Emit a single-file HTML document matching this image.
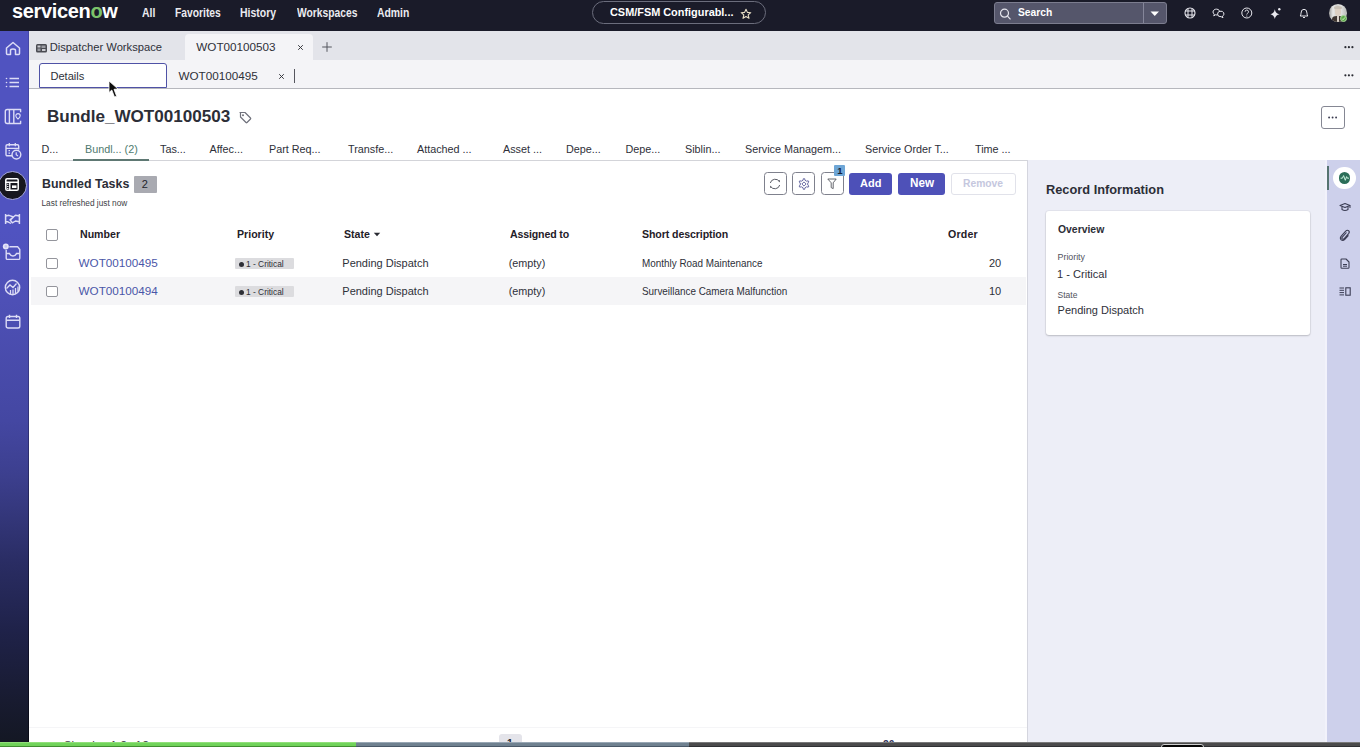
<!DOCTYPE html>
<html><head><meta charset="utf-8"><title>Bundle_WOT00100503</title>
<style>
html,body{margin:0;padding:0;}
body{width:1360px;height:747px;overflow:hidden;position:relative;background:#fff;font-family:"Liberation Sans",sans-serif;}
.t{position:absolute;white-space:nowrap;line-height:1;transform-origin:0 0;}
.r{position:absolute;}
svg.r{overflow:visible;}
</style></head><body>
<div class="r" style="left:0px;top:0px;width:1360px;height:31px;background:#1a1b29"></div>
<div class="r" style="left:29px;top:31px;width:1331px;height:29px;background:#e3e4ea"></div>
<div class="r" style="left:184.5px;top:33.5px;width:128px;height:26.5px;background:#f4f4f7;border-radius:4px 4px 0 0"></div>
<div class="r" style="left:29px;top:60px;width:1331px;height:28px;background:#f4f4f7"></div>
<div class="r" style="left:29px;top:88px;width:1331px;height:1px;background:#b6b7bd"></div>
<div class="r" style="left:29px;top:89px;width:998px;height:658px;background:#ffffff"></div>
<div class="r" style="left:1027px;top:160px;width:300px;height:587px;background:#edeef7"></div>
<div class="r" style="left:1325px;top:160px;width:2px;height:587px;background:#f2f2fb"></div>
<div class="r" style="left:1027px;top:160px;width:1px;height:587px;background:#d4d5de"></div>
<div class="r" style="left:1327px;top:160px;width:33px;height:587px;background:#cdd0eb"></div>
<div class="r" style="left:1027px;top:89px;width:333px;height:71px;background:#ffffff"></div>
<div class="r" style="left:30px;top:160px;width:997px;height:1px;background:#d3d4d9"></div>
<div class="r" style="left:0px;top:31px;width:29px;height:716px;background:linear-gradient(to bottom,#5053c0 0px,#5053c0 200px,#4e50b6 270px,#4447a2 390px,#3c3f8e 445px,#2a2d64 530px,#1f2249 600px,#181b30 670px,#131722 716px)"></div>
<div class="r" style="left:28px;top:31px;width:1px;height:716px;background:linear-gradient(to bottom,rgba(0,0,20,0.15) 0px,rgba(0,0,20,0.2) 300px,rgba(0,0,10,0.55) 716px)"></div>
<div class="t" style="left:12px;top:1.40px;font-size:20.00px;color:#ffffff;font-weight:700;letter-spacing:-0.35px;">servicen<span style="color:#7cc36a">o</span>w</div>
<div class="t" style="left:141.5px;top:7.00px;font-size:12.18px;color:#ebebf0;font-weight:700;transform:scaleX(0.8621);">All</div>
<div class="t" style="left:175px;top:8.01px;font-size:11.95px;color:#ebebf0;font-weight:700;transform:scaleX(0.8621);">Favorites</div>
<div class="t" style="left:240px;top:7.00px;font-size:12.18px;color:#ebebf0;font-weight:700;transform:scaleX(0.8621);">History</div>
<div class="t" style="left:297px;top:8.01px;font-size:11.95px;color:#ebebf0;font-weight:700;transform:scaleX(0.8621);">Workspaces</div>
<div class="t" style="left:377px;top:7.01px;font-size:12.06px;color:#ebebf0;font-weight:700;transform:scaleX(0.8621);">Admin</div>
<div class="r" style="left:592px;top:1px;width:174px;height:23px;border:1px solid #6b6d7c;border-radius:12px;box-sizing:border-box;"></div>
<div class="t" style="left:609.5px;top:7.30px;font-size:11.45px;color:#ffffff;font-weight:700;transform:scaleX(0.9524);">CSM/FSM Configurabl...</div>
<svg class="r" style="left:740px;top:8px;" width="12" height="12" viewBox="0 0 12 12"><path d="M6 1.2 L7.4 4.4 L10.8 4.7 L8.2 6.9 L9 10.3 L6 8.5 L3 10.3 L3.8 6.9 L1.2 4.7 L4.6 4.4 Z" fill="none" stroke="#e8dfc6" stroke-width="1.1" stroke-linejoin="round"/></svg>
<div class="r" style="left:993.5px;top:2px;width:173.5px;height:22px;background:#55566b;border:1px solid #7c7d8f;border-radius:3px;box-sizing:border-box;"></div>
<div class="r" style="left:1143px;top:3px;width:1px;height:20px;background:#85869a"></div>
<svg class="r" style="left:999px;top:8px;" width="13" height="12" viewBox="0 0 13 12"><circle cx="5.5" cy="5.2" r="4" fill="none" stroke="#e6e6ee" stroke-width="1.2"/><path d="M8.5 8.2 L11.5 11.3" stroke="#e6e6ee" stroke-width="1.2"/></svg>
<div class="t" style="left:1017.5px;top:7.32px;font-size:11.54px;color:#ffffff;font-weight:700;transform:scaleX(0.8929);">Search</div>
<svg class="r" style="left:1150px;top:11px;" width="10" height="6" viewBox="0 0 10 6"><path d="M0.5 0.5 L9 0.5 L4.75 5 Z" fill="#ffffff"/></svg>
<svg class="r" style="left:1184px;top:7px;" width="12" height="12" viewBox="0 0 12 12"><circle cx="6" cy="6" r="5" fill="none" stroke="#e8e8ee" stroke-width="1.1"/><path d="M4 1.4 V10.6 M8 1.4 V10.6 M1.2 4 H10.8 M1.2 8 H10.8" stroke="#e8e8ee" stroke-width="1"/></svg>
<svg class="r" style="left:1212px;top:8px;" width="13" height="10" viewBox="0 0 13 10"><path d="M1 4 a3.4 2.9 0 1 1 2.4 2.8 l-1.6 1.1 l0.5 -1.7 A3.4 2.9 0 0 1 1 4 Z" fill="none" stroke="#e8e8ee" stroke-width="1"/><path d="M5.6 6.2 a3.2 2.7 0 1 1 4.8 2 l0.6 1.5 l-1.9 -1 a3.2 2.7 0 0 1 -3.5 -2.5 Z" fill="#1a1b29" stroke="#e8e8ee" stroke-width="1"/></svg>
<svg class="r" style="left:1241px;top:7px;" width="12" height="12" viewBox="0 0 12 12"><circle cx="5.8" cy="6" r="5" fill="none" stroke="#e8e8ee" stroke-width="1"/><path d="M4.1 4.7 a1.7 1.7 0 1 1 2.4 1.6 c-0.5 0.3 -0.7 0.6 -0.7 1.2" fill="none" stroke="#e8e8ee" stroke-width="1"/><circle cx="5.8" cy="9" r="0.6" fill="#e8e8ee"/></svg>
<svg class="r" style="left:1270px;top:7px;" width="12" height="12" viewBox="0 0 12 12"><path d="M4.8 2.2 Q5.5 6.6 9.6 7.3 Q5.5 8 4.8 12 Q4.1 8 0 7.3 Q4.1 6.6 4.8 2.2 Z" fill="#e8e8ee"/><circle cx="9.3" cy="2.3" r="1.2" fill="#e8e8ee"/></svg>
<svg class="r" style="left:1298px;top:7px;" width="12" height="12" viewBox="0 0 12 12"><path d="M2.2 9 Q3 8.2 3 6.2 Q3 2.3 6 2.3 Q9 2.3 9 6.2 Q9 8.2 9.8 9 Z" fill="none" stroke="#e8e8ee" stroke-width="1" stroke-linejoin="round"/><path d="M5 10.3 Q6 11.2 7 10.3" fill="none" stroke="#e8e8ee" stroke-width="1"/></svg>
<div class="r" style="left:1329px;top:4px;width:18px;height:17.5px;border-radius:50%;overflow:hidden;background:linear-gradient(to right,#9a9a9a 0,#e8e8e6 22%,#d0d0ce 45%,#e4e4e2 65%,#b5b8b6 100%);"><div style="position:absolute;left:5.5px;top:3px;width:6.5px;height:8.5px;border-radius:45%;background:#dccfc2"></div><div style="position:absolute;left:5px;top:1.5px;width:7.5px;height:3.5px;border-radius:50% 50% 20% 20%;background:#c8c0b5"></div><div style="position:absolute;left:3px;top:11.5px;width:12px;height:8px;border-radius:40% 40% 0 0;background:#3e3530"></div><div style="position:absolute;left:7.5px;top:11.5px;width:2.5px;height:7px;background:#d9d0c8"></div></div>
<div class="r" style="left:1339.8px;top:15px;width:7px;height:7px;border-radius:50%;background:#5caa4a;border:1px solid #a9d89a;box-sizing:border-box;"></div>
<svg class="r" style="left:1340.8px;top:16px;" width="5" height="5" viewBox="0 0 5 5"><path d="M1 2.6 L2.1 3.7 L4 1.4" fill="none" stroke="#d8f5cf" stroke-width="0.9"/></svg>
<svg class="r" style="left:5px;top:41px;" width="16" height="15" viewBox="0 0 16 15"><path d="M1.5 7 L8 1.5 L14.5 7 V12.5 Q14.5 13.5 13.5 13.5 H10.5 V9.5 Q10.5 8 8 8 Q5.5 8 5.5 9.5 V13.5 H2.5 Q1.5 13.5 1.5 12.5 Z" fill="none" stroke="#dcdcf6" stroke-width="1.5" stroke-linejoin="round"/></svg>
<svg class="r" style="left:5px;top:77px;" width="15" height="11" viewBox="0 0 15 11"><path d="M4.5 1.5 H14 M4.5 5.5 H14 M4.5 9.5 H14" stroke="#dcdcf6" stroke-width="1.5"/><circle cx="1.5" cy="1.5" r="0.8" fill="#dcdcf6"/><circle cx="1.5" cy="5.5" r="0.8" fill="#dcdcf6"/><circle cx="1.5" cy="9.5" r="0.8" fill="#dcdcf6"/></svg>
<svg class="r" style="left:4px;top:108px;" width="18" height="17" viewBox="0 0 18 17"><path d="M9.8 1.5 H3.2 Q1.3 1.5 1.3 3.4 V13.6 Q1.3 15.5 3.2 15.5 H9.8 Z M5.4 1.5 V15.5 M9.8 1.5 H16.6 V4.3 M9.8 15.5 H16.6 V12.7" fill="none" stroke="#dcdcf6" stroke-width="1.4" stroke-linejoin="round"/><path d="M14 5.6 a2.2 2.2 0 0 1 2.2 2.2 c0 1.5 -2.2 3.3 -2.2 3.3 c0 0 -2.2 -1.8 -2.2 -3.3 A2.2 2.2 0 0 1 14 5.6 Z" fill="none" stroke="#dcdcf6" stroke-width="1.1"/></svg>
<svg class="r" style="left:5px;top:142px;" width="18" height="19" viewBox="0 0 18 19"><path d="M7 13.8 H2.3 Q1 13.8 1 12.5 V4 Q1 2.7 2.3 2.7 H12.4 Q13.7 2.7 13.7 4 V7.5" fill="none" stroke="#dcdcf6" stroke-width="1.4"/><path d="M4.3 1 V4.3 M10.3 1 V4.3 M1 6.3 H13.7 M3.5 8.7 H5 M3.5 11.2 H5" stroke="#dcdcf6" stroke-width="1.3"/><circle cx="11.4" cy="12.6" r="4.4" fill="#5053c0" stroke="#dcdcf6" stroke-width="1.4"/><path d="M11.2 10.3 V12.8 L13 14" fill="none" stroke="#dcdcf6" stroke-width="1.2"/></svg>
<div class="r" style="left:-2.5px;top:170.5px;width:29.5px;height:29.5px;border-radius:50%;background:#17171f;border:1.5px solid #a9abe6;box-sizing:border-box;"></div>
<svg class="r" style="left:5px;top:178px;" width="14" height="13" viewBox="0 0 14 13"><rect x="0.8" y="0.8" width="12.4" height="11.4" rx="1.3" fill="none" stroke="#ffffff" stroke-width="1.5"/><path d="M0.8 4.3 H13.2 M4.8 4.3 V12.2" stroke="#ffffff" stroke-width="1.4"/><rect x="7" y="7.4" width="4.5" height="2.6" fill="#ffffff"/><path d="M2 6.3 H3.5 M2 8.5 H3.5 M2 10.5 H3.5" stroke="#ffffff" stroke-width="0.9"/></svg>
<svg class="r" style="left:4px;top:213px;" width="17" height="12" viewBox="0 0 17 12"><path d="M1.6 1 V11 M15.4 1 V11" stroke="#dcdcf6" stroke-width="1.5"/><path d="M1.6 3 L5 2.3 L9.5 4 L6.2 7.2 M15.4 3 L11.5 2.3 L6 6.8 L8.3 9.8 L11.5 8 L15.4 8.8 M1.6 8.8 L4 8.8 L7 10.5" fill="none" stroke="#dcdcf6" stroke-width="1.4" stroke-linejoin="round"/></svg>
<svg class="r" style="left:2px;top:242px;" width="20" height="19" viewBox="0 0 20 19"><path d="M4.2 7.5 L6.2 4.8 H15.8 L17.8 7.5 V16.2 Q17.8 17.4 16.6 17.4 H5.4 Q4.2 17.4 4.2 16.2 Z" fill="none" stroke="#dcdcf6" stroke-width="1.4" stroke-linejoin="round"/><path d="M4.2 11.5 H7.5 Q8.5 14 11 14 Q13.5 14 14.5 11.5 H17.8" fill="none" stroke="#dcdcf6" stroke-width="1.4"/><circle cx="3.8" cy="4.4" r="3.6" fill="#5053c0"/><circle cx="3.8" cy="4.4" r="3" fill="#e4e4f8"/><circle cx="3.8" cy="4.4" r="1.3" fill="#c4c5ee"/></svg>
<svg class="r" style="left:4px;top:279px;" width="17" height="17" viewBox="0 0 17 17"><circle cx="8.5" cy="8.5" r="7.2" fill="none" stroke="#dcdcf6" stroke-width="1.4"/><path d="M2.5 9.5 L6 6 L9 8.5 L12.5 4.5 M6.5 15 V11 M9 15.5 V10.5 M11.5 15 V9 M14 12.5 V7.5" fill="none" stroke="#dcdcf6" stroke-width="1.3"/></svg>
<svg class="r" style="left:5px;top:314px;" width="16" height="15" viewBox="0 0 16 15"><rect x="1.2" y="2.5" width="13.6" height="11.5" rx="1.8" fill="none" stroke="#dcdcf6" stroke-width="1.4"/><path d="M1.2 6.3 H14.8 M4.5 0.8 V4 M11.5 0.8 V4" stroke="#dcdcf6" stroke-width="1.4"/></svg>
<svg class="r" style="left:35.5px;top:43.5px;" width="11" height="8.5" viewBox="0 0 11 8.5"><rect x="0" y="0" width="11" height="8.5" rx="1.5" fill="#4a4b52"/><rect x="1.5" y="1.5" width="3" height="2" fill="#c9cad0"/><rect x="5.5" y="1.5" width="4" height="2.5" fill="#9a9ba2"/><rect x="1.5" y="4.5" width="3" height="2.5" fill="#9a9ba2"/><rect x="6" y="5" width="3.5" height="2" fill="#c9cad0"/></svg>
<div class="t" style="left:49.7px;top:42.00px;font-size:11.20px;color:#2e3039;">Dispatcher Workspace</div>
<div class="t" style="left:196.3px;top:41.00px;font-size:11.70px;color:#2e3039;">WOT00100503</div>
<svg class="r" style="left:295.5px;top:43px;" width="9" height="9" viewBox="0 0 9 9"><path d="M2.2 2.2 L6.8 6.8 M6.8 2.2 L2.2 6.8" stroke="#303138" stroke-width="0.95"/></svg>
<svg class="r" style="left:321px;top:41px;" width="12" height="12" viewBox="0 0 12 12"><path d="M6 1.2 V10.8 M1.2 6 H10.8" stroke="#55565e" stroke-width="1"/></svg>
<svg class="r" style="left:1342px;top:43px;" width="13" height="8" viewBox="0 0 13 8"><circle cx="3.4" cy="4.2" r="1.1" fill="#2a2b33"/><circle cx="6.9" cy="4.2" r="1.1" fill="#2a2b33"/><circle cx="10.4" cy="4.2" r="1.1" fill="#2a2b33"/></svg>
<div class="r" style="left:38.5px;top:63px;width:128px;height:25px;background:#ffffff;border:1.8px solid #4f52a6;border-radius:3px 3px 0 0;box-sizing:border-box;"></div>
<div class="t" style="left:50.4px;top:71.31px;font-size:11.10px;color:#2e3039;">Details</div>
<div class="t" style="left:178.4px;top:70.30px;font-size:11.70px;color:#2e3039;">WOT00100495</div>
<svg class="r" style="left:276.5px;top:71.5px;" width="9" height="9" viewBox="0 0 9 9"><path d="M2.2 2.2 L6.8 6.8 M6.8 2.2 L2.2 6.8" stroke="#303138" stroke-width="0.95"/></svg>
<div class="r" style="left:294px;top:69px;width:1px;height:14px;background:#55565e"></div>
<svg class="r" style="left:1342px;top:71px;" width="13" height="8" viewBox="0 0 13 8"><circle cx="3.4" cy="4.3" r="1.1" fill="#2a2b33"/><circle cx="6.9" cy="4.3" r="1.1" fill="#2a2b33"/><circle cx="10.4" cy="4.3" r="1.1" fill="#2a2b33"/></svg>
<div class="t" style="left:47px;top:108.42px;font-size:17.10px;color:#2c2e37;font-weight:700;">Bundle_WOT00100503</div>
<svg class="r" style="left:238px;top:110px;" width="14" height="15" viewBox="0 0 14 15"><path d="M2 2.5 H7 L12.5 8 Q13 8.5 12.5 9 L9 12.5 Q8.5 13 8 12.5 L2.5 7 V2.5 Z" fill="none" stroke="#70727c" stroke-width="1.2" stroke-linejoin="round"/><circle cx="5" cy="5.3" r="1" fill="#70727c"/></svg>
<div class="r" style="left:1321.3px;top:106px;width:23.5px;height:22.7px;border:1px solid #858793;border-radius:3px;box-sizing:border-box;background:#fff"></div>
<svg class="r" style="left:1327px;top:116px;" width="13" height="3" viewBox="0 0 13 3"><circle cx="2.1" cy="1.5" r="0.95" fill="#3a3b50"/><circle cx="5.6" cy="1.5" r="0.95" fill="#3a3b50"/><circle cx="9.1" cy="1.5" r="0.95" fill="#3a3b50"/></svg>
<div class="t" style="left:41.5px;top:144.21px;font-size:10.80px;color:#2e3039;">D...</div>
<div class="t" style="left:85px;top:144.21px;font-size:10.80px;color:#4e7a6f;">Bundl... (2)</div>
<div class="t" style="left:160px;top:144.21px;font-size:10.80px;color:#2e3039;">Tas...</div>
<div class="t" style="left:209.5px;top:144.21px;font-size:10.80px;color:#2e3039;">Affec...</div>
<div class="t" style="left:269px;top:144.21px;font-size:10.80px;color:#2e3039;">Part Req...</div>
<div class="t" style="left:348px;top:144.21px;font-size:10.80px;color:#2e3039;">Transfe...</div>
<div class="t" style="left:417px;top:144.21px;font-size:10.80px;color:#2e3039;">Attached ...</div>
<div class="t" style="left:503px;top:144.21px;font-size:10.80px;color:#2e3039;">Asset ...</div>
<div class="t" style="left:566px;top:144.21px;font-size:10.80px;color:#2e3039;">Depe...</div>
<div class="t" style="left:625.5px;top:144.21px;font-size:10.80px;color:#2e3039;">Depe...</div>
<div class="t" style="left:685px;top:144.21px;font-size:10.80px;color:#2e3039;">Siblin...</div>
<div class="t" style="left:745px;top:144.21px;font-size:10.80px;color:#2e3039;">Service Managem...</div>
<div class="t" style="left:865px;top:144.21px;font-size:10.80px;color:#2e3039;">Service Order T...</div>
<div class="t" style="left:975px;top:144.21px;font-size:10.80px;color:#2e3039;">Time ...</div>
<div class="r" style="left:73px;top:158.7px;width:75.5px;height:2px;background:#5e7873"></div>
<div class="t" style="left:41.5px;top:177.30px;font-size:13.52px;color:#2c2e37;font-weight:700;transform:scaleX(0.9174);">Bundled Tasks</div>
<div class="r" style="left:134px;top:176px;width:23px;height:16.5px;background:#a9aab1;border-radius:1px"></div>
<div class="t" style="left:141.8px;top:179.00px;font-size:11.00px;color:#23242b;">2</div>
<div class="t" style="left:41.5px;top:199.22px;font-size:8.30px;color:#3d3e46;">Last refreshed just now</div>
<div class="r" style="left:764px;top:172px;width:23px;height:23px;border:1px solid #7f818d;border-radius:3.5px;box-sizing:border-box;background:#fff"></div>
<div class="r" style="left:792px;top:172px;width:23px;height:23px;border:1px solid #7f818d;border-radius:3.5px;box-sizing:border-box;background:#fff"></div>
<div class="r" style="left:820.5px;top:172px;width:23px;height:23px;border:1px solid #7f818d;border-radius:3.5px;box-sizing:border-box;background:#fff"></div>
<svg class="r" style="left:769px;top:178px;" width="13" height="12" viewBox="0 0 13 12"><path d="M10.4 3.6 A5 5 0 0 0 1.3 5" fill="none" stroke="#4a4c56" stroke-width="0.9"/><path d="M1.6 8.4 A5 5 0 0 0 10.7 7" fill="none" stroke="#4a4c56" stroke-width="0.9"/><path d="M9.2 2.6 L11 2.2 L10.8 4.3 Z" fill="#4a4c56"/><path d="M2.8 9.4 L1 9.8 L1.2 7.7 Z" fill="#4a4c56"/></svg>
<svg class="r" style="left:797.5px;top:177.5px;" width="12" height="12" viewBox="0 0 12 12"><path d="M5.06 2.22 L5.26 0.75 L6.74 0.75 L6.94 2.22 L8.81 3.29 L10.18 2.74 L10.91 4.01 L9.75 4.93 L9.75 7.07 L10.91 7.99 L10.18 9.26 L8.81 8.71 L6.94 9.78 L6.74 11.25 L5.26 11.25 L5.06 9.78 L3.19 8.71 L1.82 9.26 L1.09 7.99 L2.25 7.07 L2.25 4.93 L1.09 4.01 L1.82 2.74 L3.19 3.29 Z" fill="none" stroke="#5a5c9a" stroke-width="0.9" stroke-linejoin="round"/><path d="M6 3.9 L8.1 6 L6 8.1 L3.9 6 Z" fill="none" stroke="#5a5c9a" stroke-width="0.9"/></svg>
<svg class="r" style="left:827px;top:178px;" width="10" height="12" viewBox="0 0 10 12"><path d="M0.8 1 H9.2 L6.2 4.8 V10.6 L4.2 9.6 V4.8 Z" fill="none" stroke="#55575f" stroke-width="0.9" stroke-linejoin="round"/></svg>
<div class="r" style="left:834px;top:165px;width:11px;height:11px;background:#6ea6d6;border-radius:1px"></div>
<div class="t" style="left:837.3px;top:165.81px;font-size:9.50px;color:#142238;font-weight:700;">1</div>
<div class="r" style="left:849px;top:172.5px;width:43px;height:22.5px;background:#4d50b8;border-radius:3px"></div>
<div class="t" style="left:860px;top:178.31px;font-size:11.44px;color:#ffffff;font-weight:700;transform:scaleX(0.9615);">Add</div>
<div class="r" style="left:898px;top:172.5px;width:47px;height:22.5px;background:#4e51b8;border-radius:3px"></div>
<div class="t" style="left:909.7px;top:177.30px;font-size:12.17px;color:#ffffff;font-weight:700;transform:scaleX(0.9615);">New</div>
<div class="r" style="left:951px;top:172.5px;width:65px;height:22.5px;border:1px solid #e1e2ea;border-radius:3px;box-sizing:border-box;background:#fff"></div>
<div class="t" style="left:963.3px;top:178.31px;font-size:10.71px;color:#c5c7de;font-weight:700;transform:scaleX(0.9615);">Remove</div>
<div class="r" style="left:31px;top:277px;width:995px;height:28px;background:#f5f5f7"></div>
<div class="r" style="left:46.3px;top:229.3px;width:11.5px;height:11.5px;border:1px solid #94959c;border-radius:2px;box-sizing:border-box;background:#fff"></div>
<div class="t" style="left:79.6px;top:229.21px;font-size:11.02px;color:#1f2028;font-weight:700;transform:scaleX(0.9615);">Number</div>
<div class="t" style="left:237px;top:229.21px;font-size:11.02px;color:#1f2028;font-weight:700;transform:scaleX(0.9615);">Priority</div>
<div class="t" style="left:343.5px;top:229.21px;font-size:11.02px;color:#1f2028;font-weight:700;transform:scaleX(0.9615);">State</div>
<svg class="r" style="left:373px;top:232px;" width="8" height="5" viewBox="0 0 8 5"><path d="M0.8 0.8 H7.2 L4 4.2 Z" fill="#2a2b33"/></svg>
<div class="t" style="left:510px;top:229.21px;font-size:11.02px;color:#1f2028;font-weight:700;transform:scaleX(0.9615);letter-spacing:-0.15px">Assigned to</div>
<div class="t" style="left:641.8px;top:229.21px;font-size:11.02px;color:#1f2028;font-weight:700;transform:scaleX(0.9615);letter-spacing:-0.1px">Short description</div>
<div class="t" style="left:948px;top:229.21px;font-size:11.02px;color:#1f2028;font-weight:700;transform:scaleX(0.9615);letter-spacing:0.2px">Order</div>
<div class="r" style="left:46.3px;top:257.5px;width:11.5px;height:11.5px;border:1px solid #94959c;border-radius:2px;box-sizing:border-box;background:#fff"></div>
<div class="t" style="left:78.6px;top:257.20px;font-size:11.70px;color:#4a56a8;">WOT00100495</div>
<div class="r" style="left:235px;top:258.3px;width:58.5px;height:11px;background:#dcdcdf;border-radius:1px"></div>
<div class="r" style="left:239px;top:261.8px;width:5px;height:5px;border-radius:50%;background:#2e2f36"></div>
<div class="t" style="left:246.4px;top:260.40px;font-size:8.65px;color:#2e2f36;transform:scaleX(0.9709);">1 - Critical</div>
<div class="t" style="left:342.3px;top:258.21px;font-size:11.00px;color:#2e3039;">Pending Dispatch</div>
<div class="t" style="left:508.7px;top:258.21px;font-size:10.80px;color:#2e3039;">(empty)</div>
<div class="t" style="left:641.8px;top:259.21px;font-size:10.20px;color:#2e3039;transform:scaleX(0.9709);">Monthly Road Maintenance</div>
<div class="t" style="left:989px;top:258.21px;font-size:11.00px;color:#2e3039;">20</div>
<div class="r" style="left:46.3px;top:285.5px;width:11.5px;height:11.5px;border:1px solid #94959c;border-radius:2px;box-sizing:border-box;background:#fff"></div>
<div class="t" style="left:78.6px;top:285.20px;font-size:11.70px;color:#4a56a8;">WOT00100494</div>
<div class="r" style="left:235px;top:286.3px;width:58.5px;height:11px;background:#dcdcdf;border-radius:1px"></div>
<div class="r" style="left:239px;top:289.8px;width:5px;height:5px;border-radius:50%;background:#2e2f36"></div>
<div class="t" style="left:246.4px;top:288.40px;font-size:8.65px;color:#2e2f36;transform:scaleX(0.9709);">1 - Critical</div>
<div class="t" style="left:342.3px;top:286.21px;font-size:11.00px;color:#2e3039;">Pending Dispatch</div>
<div class="t" style="left:508.7px;top:286.21px;font-size:10.80px;color:#2e3039;">(empty)</div>
<div class="t" style="left:641.8px;top:287.21px;font-size:10.20px;color:#2e3039;transform:scaleX(0.9709);">Surveillance Camera Malfunction</div>
<div class="t" style="left:989px;top:286.21px;font-size:11.00px;color:#2e3039;">10</div>
<div class="r" style="left:29px;top:727px;width:998px;height:1px;background:#f5f5f7"></div>
<div class="t" style="left:64px;top:740.01px;font-size:11.30px;color:#3a3b44;">Showing 1-2 of 2</div>
<div class="r" style="left:499px;top:734px;width:22.5px;height:13px;background:#e4e4ea;border-radius:3px"></div>
<div class="t" style="left:507px;top:738.00px;font-size:10.50px;color:#2a2b33;font-weight:700;">1</div>
<div class="t" style="left:883px;top:738.50px;font-size:10.82px;color:#33355c;font-weight:700;transform:scaleX(0.9524);">20</div>
<div class="t" style="left:1046px;top:182.82px;font-size:13.57px;color:#2c2e37;font-weight:700;transform:scaleX(0.9434);">Record Information</div>
<div class="r" style="left:1045.5px;top:210.5px;width:264.5px;height:124px;background:#ffffff;border-radius:3px;box-shadow:0 1px 2px rgba(0,0,0,0.18),0 0 0 1px rgba(0,0,0,0.04)"></div>
<div class="t" style="left:1057.6px;top:224.02px;font-size:10.82px;color:#2c2e37;font-weight:700;transform:scaleX(0.9615);">Overview</div>
<div class="t" style="left:1057.6px;top:252.81px;font-size:8.80px;color:#50525c;">Priority</div>
<div class="t" style="left:1057.1px;top:268.62px;font-size:11.43px;color:#2e3039;transform:scaleX(0.9709);">1 - Critical</div>
<div class="t" style="left:1057.6px;top:291.20px;font-size:8.50px;color:#50525c;">State</div>
<div class="t" style="left:1057.6px;top:305.00px;font-size:11.00px;color:#2e3039;">Pending Dispatch</div>
<div class="r" style="left:1327px;top:166px;width:2px;height:23.5px;background:#557370"></div>
<div class="r" style="left:1333.3px;top:166.8px;width:22.3px;height:22.3px;border-radius:50%;background:#ffffff"></div>
<div class="r" style="left:1338.6px;top:172px;width:11.5px;height:11.5px;border-radius:50%;background:#2b6e58"></div>
<svg class="r" style="left:1338.6px;top:172px;" width="12" height="12" viewBox="0 0 12 12"><path d="M1.6 6.2 L3.4 6.2 L4.6 3.6 L6.3 8.3 L7.6 4.6 L8.4 6.2 L10 6.2" fill="none" stroke="#c9f2df" stroke-width="1" stroke-linejoin="round"/></svg>
<svg class="r" style="left:1339px;top:202px;" width="12" height="10" viewBox="0 0 12 10"><path d="M1 3.5 L6 1.5 L11 3.5 L6 5.5 Z" fill="none" stroke="#3c3e55" stroke-width="1.1" stroke-linejoin="round"/><path d="M3 4.5 V7.5 Q6 9.5 9 7.5 V4.5" fill="none" stroke="#3c3e55" stroke-width="1.1"/><path d="M11 3.5 V6" stroke="#3c3e55" stroke-width="1"/></svg>
<svg class="r" style="left:1339px;top:229px;" width="11" height="12" viewBox="0 0 11 12"><path d="M7.5 3.5 L3.3 8.2 Q2.4 9.4 3.4 10.1 Q4.3 10.6 5.2 9.6 L9.6 4.6 Q11 2.9 9.6 1.7 Q8.2 0.6 6.7 2.2 L2.2 7.2 Q0.5 9.3 2.2 10.9 Q4 12.2 5.8 10.4 L9.5 6.3" fill="none" stroke="#3c3e55" stroke-width="1.1"/></svg>
<svg class="r" style="left:1339.5px;top:257.5px;" width="10" height="11" viewBox="0 0 10 11"><path d="M1 1.8 Q1 1 1.8 1 H6 L9 4 V9.5 Q9 10.3 8.2 10.3 H1.8 Q1 10.3 1 9.5 Z" fill="none" stroke="#3c3e55" stroke-width="1.1" stroke-linejoin="round"/><path d="M3 6.5 H7 M3 8.2 H7" stroke="#3c3e55" stroke-width="1"/></svg>
<svg class="r" style="left:1339px;top:287px;" width="12" height="9" viewBox="0 0 12 9"><path d="M0.5 1 H5 M0.5 3.3 H5 M0.5 5.6 H5 M0.5 7.9 H5" stroke="#3c3e55" stroke-width="1"/><rect x="6.8" y="0.8" width="4.4" height="7.4" fill="none" stroke="#3c3e55" stroke-width="1.1"/></svg>
<svg class="r" style="left:108px;top:80px;" width="14" height="20" viewBox="0 0 14 20"><path d="M1 1 L1 12.5 L3.8 10 L6.5 17 L8.6 16.2 L6 9.3 L10 9 Z" fill="#0d0d0d" stroke="#ffffff" stroke-width="0.8" stroke-linejoin="round"/></svg>
<div class="r" style="left:0px;top:742px;width:356px;height:5px;background:linear-gradient(to bottom,#a8e890 0,#72d45b 1.2px,#70d259 3.8px,#418d30 4.2px)"></div>
<div class="r" style="left:356px;top:742px;width:333px;height:5px;background:linear-gradient(to bottom,#b6c2ce 0,#6f8190 1.2px,#6f8190 3.8px,#4a5868 4.2px)"></div>
<div class="r" style="left:689px;top:742px;width:671px;height:5px;background:linear-gradient(to bottom,#9a9a9a 0,#4b4b4c 1.2px,#4b4b4c 3.8px,#2f3033 4.2px)"></div>
<div class="r" style="left:1160.5px;top:744px;width:43px;height:6px;border:1.5px solid #d0d0d0;border-radius:4px;box-sizing:border-box;background:#050505"></div>
</body></html>
